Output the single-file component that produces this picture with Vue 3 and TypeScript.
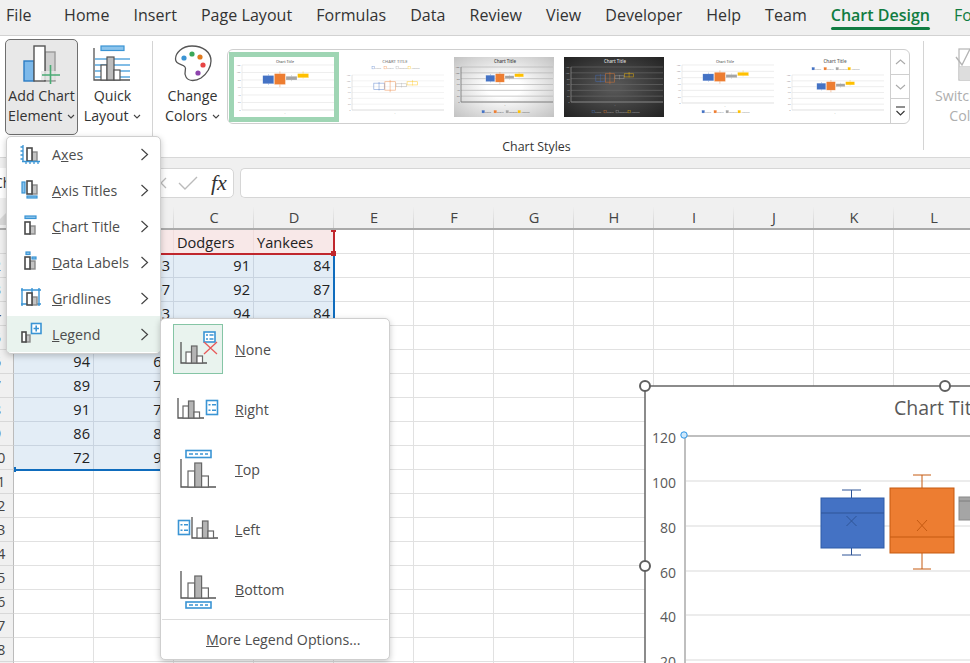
<script setup lang="ts">
const tabs = ['Home', 'Insert', 'Page Layout', 'Formulas', 'Data', 'Review', 'View', 'Developer', 'Help', 'Team']

const bar = (x: number, y: number, w: number, b: number, fill: string, stroke: string, sw = 1.4) =>
  `<rect x="${x}" y="${y}" width="${w}" height="${b - y}" fill="${fill}" stroke="${stroke}" stroke-width="${sw}"/>`
const blue = (x: number, y: number, w: number, h: number) =>
  `<rect x="${x}" y="${y}" width="${w}" height="${h}" fill="#8cc4ec" stroke="#3a94d4" stroke-width="1.2"/>`
const pair = (x: number, w: number, t1: number, t2: number, b: number) =>
  bar(x + w, t2, w, b, '#c4c4c4', '#8a8a8a', 1.4) + bar(x, t1, w, b, '#fff', '#4a4a4a', 1.6)
const legendBox = (x: number, y: number, w: number, h: number) =>
  `<rect x="${x}" y="${y}" width="${w}" height="${h}" fill="#fff" stroke="#3a94d4" stroke-width="1.6"/>`
const legendV = (x: number, y: number, h = 14) =>
  legendBox(x, y, 11, h) +
  `<path d="M${x + 2} ${y + h * 0.3}h2M${x + 5.5} ${y + h * 0.3}h4M${x + 2} ${y + h * 0.7}h2M${x + 5.5} ${y + h * 0.7}h4" stroke="#3a94d4" stroke-width="1.5"/>`
const legendH = (x: number, y: number, h: number) =>
  legendBox(x, y, 25, h) +
  `<path d="M${x + 3} ${y + h / 2}h4M${x + 9} ${y + h / 2}h3M${x + 14} ${y + h / 2}h3M${x + 19} ${y + h / 2}h3" stroke="#3a94d4" stroke-width="1.6"/>`
const axes = (x: number, top: number, base: number, right: number) =>
  `<path d="M${x} ${top}V${base}H${right}" fill="none" stroke="#555" stroke-width="1.3"/>`
const hist = (x: number, w: number, a: number, b: number, c: number, base: number) =>
  bar(x, a, w, base, '#fff', '#666', 1.2) + bar(x + w, b, w, base, '#b4b4b4', '#666', 1.2) + bar(x + 2 * w, c, w, base, '#fff', '#666', 1.2)

const mainItems = [
  { pre: 'A', key: 'x', post: 'es', icon: pair(8, 5, 6, 10, 19) + '<path d="M4 3V20M1.500 5H4M1.500 9H4M1.500 13H4M1.500 17H4M3 19.500H21M7 19.500V22M11 19.500V22M15 19.500V22M19 19.500V22" fill="none" stroke="#3a94d4" stroke-width="1.3"/>' },
  { pre: '', key: 'A', post: 'xis Titles', icon: pair(8, 5, 3, 7, 16) + blue(3, 4, 3, 11) + blue(8, 18, 10, 2) },
  { pre: '', key: 'C', post: 'hart Title', icon: blue(6, 2, 11, 2.5) + pair(6, 5, 8, 12, 20) },
  { pre: '', key: 'D', post: 'ata Labels', icon: blue(7, 2, 4, 2.5) + blue(13, 7, 4, 2) + pair(6, 5, 7, 11, 19) },
  { pre: '', key: 'G', post: 'ridlines', icon: '<path d="M3 2V20M13 2V20M20 2V20M2 4H22M2 18H22" fill="none" stroke="#3a94d4" stroke-width="1.4"/>' + pair(8, 5, 7, 11, 19) },
  { pre: '', key: 'L', post: 'egend', icon: pair(3, 4, 10, 13, 20) + legendBox(12.5, 1.5, 9.5, 10) + '<path d="M17.200 3.500V9.500M14.500 6.500H20" stroke="#3a94d4" stroke-width="1.6"/>', current: true },
]

const legendItems = [
  { key: 'N', post: 'one', selected: true, icon: axes(8, 18, 39, 34) + hist(13, 5.5, 28, 22, 32, 39) + legendV(31, 8, 10) + '<path d="M31 18L44 30M44 18L31 30" stroke="#e85a5a" stroke-width="1.3"/>' },
  { key: 'R', post: 'ight', icon: axes(5, 14, 34, 31) + hist(10, 5.5, 22, 17, 28, 34) + legendV(33.5, 16.5) },
  { key: 'T', post: 'op', icon: legendH(13, 6.5, 7) + axes(8, 15, 43, 43) + hist(15, 6.8, 27, 19, 32, 43) },
  { key: 'L', post: 'eft', icon: legendV(5.5, 16.5) + axes(19, 13, 34, 45) + hist(24, 5.5, 24, 17, 27, 34) },
  { key: 'B', post: 'ottom', icon: axes(8, 7, 34, 43) + hist(15, 6.8, 19, 12, 24, 34) + legendH(13, 38, 6) },
]

const colLetters = 'ABCDEFGHIJKL'.split('')
const aVals: Record<number, number> = { 2: 88, 3: 85, 4: 90, 5: 82, 6: 94, 7: 89, 8: 91, 9: 86, 10: 72 }
const bVals: Record<number, number> = { 2: 83, 3: 97, 4: 93, 5: 65, 6: 68, 7: 75, 8: 79, 9: 84, 10: 92 }
const cVals: Record<number, number> = { 2: 91, 3: 92, 4: 94, 5: 88, 6: 90, 7: 86, 8: 79, 9: 85, 10: 93 }
const dVals: Record<number, number> = { 2: 84, 3: 87, 4: 84, 5: 91, 6: 95, 7: 82, 8: 88, 9: 90, 10: 86 }
const rows = Array.from({ length: 19 }, (_, i) => i + 1)

function cellText(r: number, c: number): string {
  if (r === 1) return ['Tigers', 'Giants', 'Dodgers', 'Yankees'][c] ?? ''
  if (r > 10 || c > 3) return ''
  return String([aVals, bVals, cVals, dVals][c][r])
}
function cellClass(r: number, c: number) {
  return {
    head: r === 1 && c < 4,
    sel: r > 1 && r <= 10 && c < 4,
    num: r > 1,
  }
}

interface Thumb {
  title: string
  tone: string
  titleColor: string
  titleSize: number
  grid: string
  axis: string
  label: string
  left: number
  right: number
  top: number
  bottom: number
  boxW: number
  outline: boolean
  legend: number
  selected?: boolean
}
const thumbs: Thumb[] = [
  { title: 'Chart Title', tone: 'plain', titleColor: '#666', titleSize: 3.6, grid: '#e6e6e6', axis: '#e6e6e6', label: '#888', left: 8, right: 100, top: 8, bottom: 53, boxW: 11, outline: false, legend: 0, selected: true },
  { title: 'CHART TITLE', tone: 'plain', titleColor: '#888', titleSize: 4.2, grid: '#eee', axis: '#ddd', label: '#999', left: 8, right: 100, top: 18, bottom: 53, boxW: 10.5, outline: true, legend: 11 },
  { title: 'Chart Title', tone: 'silver', titleColor: '#444', titleSize: 4.4, grid: '#b4b4b4', axis: '#777', label: '#555', left: 7, right: 99, top: 10, bottom: 45, boxW: 9, outline: false, legend: 55 },
  { title: 'Chart Title', tone: 'dark', titleColor: '#ddd', titleSize: 4.4, grid: '#666', axis: '#888', label: '#aaa', left: 7, right: 99, top: 10, bottom: 45, boxW: 9, outline: true, legend: 55 },
  { title: 'Chart Title', tone: 'plain', titleColor: '#666', titleSize: 3.6, grid: '#e6e6e6', axis: '#e6e6e6', label: '#888', left: 8, right: 100, top: 8, bottom: 46, boxW: 11, outline: false, legend: 55 },
  { title: 'Chart Title', tone: 'plain', titleColor: '#666', titleSize: 4.6, grid: '#e6e6e6', axis: '#e6e6e6', label: '#888', left: 8, right: 100, top: 18, bottom: 53, boxW: 9, outline: false, legend: 12 },
]
const series = [
  { name: 'Tigers', c: '#4472c4', lo: 70, hi: 92, wl: 67, wh: 96 },
  { name: 'Giants', c: '#ed7d31', lo: 68, hi: 97, wl: 61, wh: 103 },
  { name: 'Dodgers', c: '#a5a5a5', lo: 80, hi: 90, wl: 77, wh: 93 },
  { name: 'Yankees', c: '#ffc000', lo: 86, hi: 97, wl: 84, wh: 103 },
]
const ticks = [0, 20, 40, 60, 80, 100, 120]
const ty = (t: Thumb, v: number) => t.bottom - (v / 120) * (t.bottom - t.top)
const tx = (t: Thumb, i: number) => (t.left + t.right) / 2 - 2 + (i - 2) * (t.boxW + 0.6)

const chartTicks = [
  { v: 120, y: 52 },
  { v: 100, y: 97 },
  { v: 80, y: 142 },
  { v: 60, y: 187 },
  { v: 40, y: 231 },
  { v: 20, y: 276 },
]
</script>

<template>
  <div class="app">
    <nav class="tabs">
      <span class="tab file">File</span>
      <span v-for="t in tabs" :key="t" class="tab">{{ t }}</span>
      <span class="tab tab-on">Chart Design</span>
      <span class="tab tab-green">Format</span>
    </nav>

    <section class="ribbon">
      <div class="rb add">
        <svg class="rb-icon" width="40" height="40" viewBox="0 0 40 40">
          <rect x="2" y="17" width="10" height="20" fill="#7db9ea" stroke="#2b7cc4" stroke-width="1.4" />
          <rect x="23" y="8" width="10" height="29" fill="#cfcfcf" stroke="#9a9a9a" stroke-width="1.4" />
          <rect x="12" y="2" width="11" height="35" fill="#fff" stroke="#555" stroke-width="1.4" />
          <rect x="19" y="27" width="19" height="9" fill="#e8e8e8" opacity="0.85" />
          <path d="M20 31H38M28.500 21V40" stroke="#49ab74" stroke-width="1.6" />
        </svg>
        <span>Add Chart</span>
        <span>Element <svg class="caret" width="8" height="5" viewBox="0 0 8 5"><path d="M1 1l3 3 3-3" fill="none" stroke="#444" stroke-width="1.1" /></svg></span>
      </div>
      <div class="rb quick">
        <svg class="rb-icon" width="40" height="40" viewBox="0 0 40 40">
          <path d="M2 16H37M2 22H37M2 28H37M2 34H37" stroke="#5aa8de" stroke-width="1.3" />
          <rect x="8" y="3" width="23" height="4.500" fill="#8cc4ec" stroke="#3a94d4" stroke-width="1.2" />
          <path d="M1 5V37H37" fill="none" stroke="#555" stroke-width="1.3" />
          <rect x="8" y="22" width="6" height="15" fill="#fff" stroke="#555" stroke-width="1.2" />
          <rect x="14" y="14" width="7" height="23" fill="#bdbdbd" stroke="#555" stroke-width="1.2" />
          <rect x="21" y="27" width="6" height="10" fill="#fff" stroke="#555" stroke-width="1.2" />
        </svg>
        <span>Quick</span>
        <span>Layout <svg class="caret" width="8" height="5" viewBox="0 0 8 5"><path d="M1 1l3 3 3-3" fill="none" stroke="#444" stroke-width="1.1" /></svg></span>
      </div>
      <i class="vsep first"></i>
      <div class="rb colors">
        <svg class="rb-icon" width="40" height="40" viewBox="0 0 40 40">
          <path d="M19 3C9 3 2.500 10 2.500 16C2.500 22 10 21 12 24C14 27 10 29 13 34C16 39 23 38 28 35C34 31 38 24 38 18C38 9 30 3 19 3Z" fill="#fff" stroke="#555" stroke-width="1.3" />
          <circle cx="11" cy="15" r="2.600" fill="#3a94d4" />
          <circle cx="19" cy="11" r="2.600" fill="#3aa757" />
          <circle cx="27" cy="14" r="2.600" fill="#e07a1f" />
          <circle cx="30" cy="22" r="2.600" fill="#e84545" />
          <circle cx="25" cy="30" r="2.600" fill="#8e44ad" />
        </svg>
        <span>Change</span>
        <span>Colors <svg class="caret" width="8" height="5" viewBox="0 0 8 5"><path d="M1 1l3 3 3-3" fill="none" stroke="#444" stroke-width="1.1" /></svg></span>
      </div>
      <div class="styles">
        <div class="gallery">
          <div class="thumbs">
            <div v-for="(t, n) in thumbs" :key="n" class="thumb" :class="['tone-' + t.tone, { selected: t.selected }]">
              <svg width="100" height="60" viewBox="0 0 100 60">
                <text x="51" :y="t.selected ? 5.5 : 6" text-anchor="middle" :fill="t.titleColor" :font-size="t.titleSize" font-weight="600">{{ t.title }}</text>
                <line v-for="v in ticks" :key="v" :x1="t.left" :x2="t.right" :y1="ty(t, v)" :y2="ty(t, v)" :stroke="t.grid" stroke-width="0.7" />
                <path :d="`M${t.left} ${t.top}V${t.bottom}H${t.right}`" fill="none" :stroke="t.axis" stroke-width="0.8" />
                <text v-for="v in ticks" :key="'l' + v" :x="t.left - 1.5" :y="ty(t, v) + 0.9" text-anchor="end" :fill="t.label" font-size="2.4">{{ v }}</text>
                <g v-for="(s, i) in series" :key="s.name">
                  <line :x1="tx(t, i) + t.boxW / 2" :x2="tx(t, i) + t.boxW / 2" :y1="ty(t, s.wl)" :y2="ty(t, s.wh)" :stroke="s.c" stroke-width="0.5" opacity="0.8" />
                  <rect :x="tx(t, i)" :y="ty(t, s.hi)" :width="t.boxW" :height="ty(t, s.lo) - ty(t, s.hi)" :fill="t.outline ? 'none' : s.c" :stroke="t.outline ? s.c : '#ffffff80'" :stroke-width="t.outline ? 0.7 : 0.4" :opacity="t.outline ? 0.6 : 1" />
                </g>
                <text x="51" :y="t.bottom + 4" text-anchor="middle" :fill="t.label" font-size="2.4">1</text>
                <g v-if="t.legend">
                  <g v-for="(s, i) in series" :key="'k' + s.name">
                    <rect :x="28 + i * 12" :y="t.legend - 1.5" width="2.4" height="2.4" :fill="t.outline ? 'none' : s.c" :stroke="s.c" stroke-width="0.3" />
                    <text :x="31 + i * 12" :y="t.legend + 0.7" :fill="t.label" font-size="2.2">{{ s.name }}</text>
                  </g>
                </g>
              </svg>
            </div>
          </div>
          <div class="scroll">
            <span><svg width="11" height="6" viewBox="0 0 11 6"><path d="M1 5l4.500-4 4.500 4" fill="none" stroke="#aaa" stroke-width="1.1" /></svg></span>
            <span><svg width="11" height="6" viewBox="0 0 11 6"><path d="M1 1l4.500 4 4.500-4" fill="none" stroke="#aaa" stroke-width="1.1" /></svg></span>
            <span><svg width="11" height="10" viewBox="0 0 11 10"><path d="M1 1H10" stroke="#333" stroke-width="1.1" /><path d="M1.500 5l4 4 4-4" fill="none" stroke="#333" stroke-width="1.1" /></svg></span>
          </div>
        </div>
        <div class="group-label">Chart Styles</div>
      </div>
      <i class="vsep second"></i>
      <div class="rb switch">
        <svg class="rb-icon" width="40" height="40" viewBox="0 0 40 40">
          <rect x="4" y="6" width="30" height="31" fill="none" stroke="#bbb" stroke-width="1.3" />
          <path d="M4 24H34M19 6V37" stroke="#ccc" stroke-width="1.3" />
          <rect x="4.500" y="24" width="14" height="13" fill="#ddd" />
          <path d="M1 14l6 8 8-16" fill="none" stroke="#b5b5b5" stroke-width="1.4" />
        </svg>
        <span>Switch Row/</span>
        <span>Column</span>
      </div>
    </section>

    <div class="strip"></div>

    <div class="formula">
      <div class="namebox"><span>Chart 1</span></div>
      <div class="fxbox">
        <svg class="fx-x" width="14" height="14" viewBox="0 0 14 14"><path d="M2 2l10 10M12 2L2 12" stroke="#bbb" stroke-width="1.3" /></svg>
        <svg class="fx-check" width="20" height="14" viewBox="0 0 20 14"><path d="M1 7l6 6L19 1" fill="none" stroke="#bbb" stroke-width="1.4" /></svg>
        <span class="fx">fx</span>
      </div>
      <div class="input"></div>
    </div>

    <div class="sheet">
      <div class="grid">
        <div class="corner"><i></i></div>
        <div v-for="c in colLetters" :key="c" class="colhead">{{ c }}</div>
        <template v-for="r in rows" :key="r">
          <div class="rowhead"><span>{{ r }}</span></div>
          <div v-for="(c, ci) in colLetters" :key="c" class="cell" :class="cellClass(r, ci)">{{ cellText(r, ci) }}</div>
        </template>
      </div>
      <i class="range-blue"></i>
      <i class="range-red"></i>
      <i class="h-red a"></i>
      <i class="h-red b"></i>
      <i class="h-blue"></i>

      <svg class="chart" width="340" height="290" viewBox="0 0 340 290">
        <rect x="1" y="1" width="340" height="300" fill="#fff" stroke="#666" stroke-width="1.5" />
        <text x="250" y="30" fill="#595959" font-size="19.5">Chart Title</text>
        <line v-for="t in chartTicks.slice(1)" :key="t.v" x1="41" x2="340" :y1="t.y - 1" :y2="t.y - 1" stroke="#d9d9d9" stroke-width="1" />
        <path d="M41 290V51H340" fill="none" stroke="#bfbfbf" stroke-width="2" />
        <text v-for="t in chartTicks" :key="'t' + t.v" x="32" :y="t.y + 6" text-anchor="end" fill="#595959" font-size="14">{{ t.v }}</text>
        <circle cx="40" cy="50" r="3.2" fill="#cfe8fb" stroke="#2b95e6" stroke-width="1" />

        <path d="M198 105H217M207.500 105V113M198 170H217M207.500 163V170" fill="none" stroke="#2f5597" stroke-width="1" />
        <rect x="177" y="113" width="63" height="50" fill="#4472c4" stroke="#2f5da8" stroke-width="1" />
        <path d="M177 128H240M202.500 131L212.500 141M212.500 131L202.500 141" fill="none" stroke="#2f5597" stroke-width="1" />

        <path d="M269 90H287M278 90V103M269 184H287M278 168V184" fill="none" stroke="#c55a11" stroke-width="1" />
        <rect x="246" y="103" width="64" height="65" fill="#ed7d31" stroke="#c55a11" stroke-width="1" />
        <path d="M246 152H310M273 135L283 146M283 135L273 146" fill="none" stroke="#c55a11" stroke-width="1" />

        <rect x="315" y="112" width="30" height="23" fill="#a5a5a5" stroke="#8a8a8a" stroke-width="1" />
        <path d="M315 116H340" stroke="#7f7f7f" stroke-width="1" />

        <circle cx="1" cy="1" r="5" fill="#fff" stroke="#5f5f5f" stroke-width="2" />
        <circle cx="301" cy="1" r="5" fill="#fff" stroke="#5f5f5f" stroke-width="2" />
        <circle cx="1" cy="181" r="5" fill="#fff" stroke="#5f5f5f" stroke-width="2" />
      </svg>
    </div>

    <div class="menu main-menu">
      <div v-for="m in mainItems" :key="m.post" class="mi" :class="{ current: m.current }">
        <svg class="mi-icon" width="24" height="24" viewBox="0 0 24 24" v-html="m.icon"></svg>
        <span class="mi-label">{{ m.pre }}<u>{{ m.key }}</u>{{ m.post }}</span>
        <svg class="chev" width="9" height="13" viewBox="0 0 9 13"><path d="M1.500 1l6 5.500-6 5.500" fill="none" stroke="#444" stroke-width="1.2" /></svg>
      </div>
    </div>

    <div class="menu legend-menu">
      <div v-for="m in legendItems" :key="m.post" class="li">
        <span class="li-box" :class="{ selected: m.selected }">
          <svg width="50" height="50" viewBox="0 0 50 50" v-html="m.icon"></svg>
        </span>
        <span class="li-label"><u>{{ m.key }}</u>{{ m.post }}</span>
      </div>
      <div class="more"><span><u>M</u>ore Legend Options...</span></div>
    </div>
  </div>
</template>

<style>
html, body { margin: 0; padding: 0; overflow: hidden; background: #fff; }
</style>

<style scoped>
.app {
  position: relative;
  width: 970px;
  height: 663px;
  overflow: hidden;
  font-family: "Open Sans", "Noto Sans", sans-serif;
  color: #333;
  background: #fff;
}
.tabs {
  display: flex;
  gap: 24px;
  height: 35px;
  padding-left: 6px;
  align-items: flex-start;
  background: #f0f0f0;
  border-bottom: 1px solid #d2d2d2;
  font-size: 16px;
  letter-spacing: 0.05px;
  line-height: 31px;
  white-space: nowrap;
  box-sizing: content-box;
}
.tab { position: relative; height: 30px; }
.file { margin-right: 8.5px; }
.tab-on { color: #107c41; font-weight: 600; letter-spacing: 0; }
.tab-on::after {
  content: "";
  position: absolute;
  left: 0;
  right: 0;
  top: 27px;
  height: 3px;
  border-radius: 2px;
  background: #107c41;
}
.tab-green { color: #107c41; }

.ribbon {
  display: flex;
  align-items: flex-start;
  height: 121px;
  padding: 3px 0 0 5px;
  box-sizing: border-box;
  background: #fff;
  font-size: 14.2px;
  line-height: 20px;
  overflow: hidden;
}
.rb {
  display: flex;
  flex-direction: column;
  align-items: center;
  flex: none;
  white-space: nowrap;
  box-sizing: border-box;
  height: 96px;
}
.rb-icon { margin: 4px 0 3px; display: block; flex: none; }
.add .rb-icon { margin-bottom: 2px; }
.caret { vertical-align: 2px; margin-left: 1px; }
.add {
  width: 73px;
  background: #e8e8e8;
  border: 1px solid #6f6f6f;
  border-radius: 5px;
}
.quick { width: 65px; margin-left: 2px; }
.vsep { display: block; flex: none; width: 1px; height: 109px; margin-top: 2px; background: #d4d4d4; }
.vsep.first { margin-left: 7px; }
.colors { width: 65px; margin-left: 7px; }
.styles { margin-left: 2px; width: 683px; flex: none; }
.gallery {
  display: flex;
  height: 75px;
  margin-top: 10px;
  box-sizing: border-box;
  border: 1px solid #cfcfcf;
  border-radius: 6px;
  background: #fff;
}
.thumbs { flex: 1; display: flex; align-items: center; gap: 10px; padding-left: 1px; }
.thumb { width: 100px; height: 60px; flex: none; background: #fff; line-height: 0; overflow: hidden; }
.thumb text { font-family: "Open Sans", sans-serif; }
.thumb.selected { border: 5px solid #9fd5b4; margin-right: -5px; }
.tone-silver { background: radial-gradient(ellipse at center, #fff 25%, #c2c2c2 100%); }
.tone-dark { background: radial-gradient(ellipse at center, #555 10%, #222 100%); }
.scroll { width: 18px; flex: none; display: flex; flex-direction: column; border-left: 1px solid #cfcfcf; }
.scroll span { display: flex; align-items: center; justify-content: center; height: 24.5px; border-bottom: 1px solid #cfcfcf; }
.scroll span:last-child { border-bottom: 0; }
.group-label { text-align: center; font-size: 12.4px; line-height: 16px; margin-top: 15px; color: #333; padding-right: 64px; }
.vsep.second { margin-left: 13px; }
.switch { color: #aeaeae; width: 80px; margin-left: 11px; }

.strip { height: 11px; background: #f0f0f0; border-top: 1px solid #d8d8d8; box-sizing: border-box; }

.formula {
  display: flex;
  height: 30px;
  background: #f0f0f0;
}
.namebox {
  flex: none;
  width: 150px;
  background: #fff;
  font-size: 14px;
  line-height: 30px;
  white-space: nowrap;
  overflow: hidden;
}
.namebox span { display: block; margin-left: -6px; }
.fxbox {
  display: flex;
  align-items: center;
  flex: none;
  width: 84px;
  padding-left: 3px;
  box-sizing: border-box;
  background: #fff;
  border: 1px solid #d6d6d6;
  border-radius: 5px;
}
.fx-check { margin-left: 10px; }
.fx { font-family: "Liberation Serif", serif; font-style: italic; font-size: 22px; font-weight: 400; color: #333; margin-left: 13px; line-height: 26px; }
.input {
  flex: 1;
  margin-left: 6px;
  background: #fff;
  border: 1px solid #d6d6d6;
  border-right: 0;
  border-radius: 5px 0 0 5px;
}

.sheet { position: relative; height: 465px; overflow: hidden; background: #fff; }
.grid {
  display: grid;
  grid-template-columns: 14px repeat(12, 80px);
  grid-template-rows: 32px;
  grid-auto-rows: 24px;
  font-size: 14.6px;
  color: #222;
}
.corner { background: #f0f0f0; border-bottom: 2px solid #aaa; border-right: 1px solid #bbb; position: relative; overflow: hidden; box-sizing: border-box; }
.corner i { position: absolute; left: -6px; bottom: 3px; border-style: solid; border-width: 0 0 12px 12px; border-color: transparent transparent #d8d8d8 transparent; }
.colhead {
  display: flex;
  align-items: flex-end;
  justify-content: center;
  box-sizing: border-box;
  line-height: 22px;
  font-size: 14.6px;
  color: #444;
  border-bottom: 2px solid #aaa;
  background: #f0f0f0 linear-gradient(to bottom, transparent 28%, #d0d0d0 100%) right / 1px 100% no-repeat;
}
.rowhead {
  background: #f0f0f0;
  border-right: 1px solid #bbb;
  border-bottom: 1px solid #d8d8d8;
  box-sizing: border-box;
  overflow: hidden;
  line-height: 23px;
  color: #444;
}
.rowhead span { display: block; width: 32px; margin-left: -19px; text-align: center; }
.cell {
  box-sizing: border-box;
  border-right: 1px solid #e1e1e1;
  border-bottom: 1px solid #e1e1e1;
  padding: 0 3px;
  line-height: 23px;
  white-space: nowrap;
  overflow: hidden;
}
.cell.num { text-align: right; }
.cell.head { background: #f8e8e8; border-color: #f0dcdc; line-height: 25px; }
.cell.sel { background: #e3edf6; border-color: #c9d4e0; }
.range-blue {
  position: absolute;
  left: 14px;
  top: 56px;
  width: 321px;
  height: 217px;
  box-sizing: border-box;
  border-right: 2px solid #0f6cbd;
  border-bottom: 2px solid #0f6cbd;
}
.range-red {
  position: absolute;
  left: 14px;
  top: 32px;
  width: 321px;
  height: 25px;
  box-sizing: border-box;
  border-right: 2px solid #c0272d;
  border-bottom: 2px solid #c0272d;
}
.h-red { position: absolute; background: #c0272d; }
.h-red.a { left: 331px; top: 53px; width: 5px; height: 5px; }
.h-red.b { left: 331px; top: 32px; width: 5px; height: 2px; }
.h-blue { position: absolute; left: 14px; top: 269px; width: 2px; height: 5px; background: #0f6cbd; }
.chart { position: absolute; left: 644px; top: 187px; overflow: visible; }
.chart text { font-family: "Open Sans", sans-serif; }

.menu {
  position: absolute;
  box-sizing: border-box;
  background: #fff;
  border: 1px solid #cfcfcf;
  border-radius: 5px;
  box-shadow: 0 2px 6px rgba(0, 0, 0, 0.22);
  font-size: 14.2px;
  color: #4d4d4d;
}
.main-menu { left: 6px; top: 136px; width: 155px; height: 218px; z-index: 2; overflow: hidden; }
.mi { display: flex; align-items: center; height: 36px; padding-left: 12px; position: relative; top: -1px; white-space: nowrap; }
.mi.current { background: #e9f3ee; }
.mi-icon { flex: none; }
.mi-label { margin-left: 9px; flex: 1; }
.chev { flex: none; margin-right: 11px; }
.legend-menu { left: 160px; top: 318px; width: 230px; height: 342px; z-index: 3; }
.li { display: flex; align-items: center; height: 60px; padding-left: 12px; box-sizing: border-box; }
.li-box { display: block; width: 50px; height: 50px; flex: none; line-height: 0; outline: 1px solid transparent; outline-offset: -1px; }
.li-box.selected { background: #e9f3ee; outline-color: #85c5a5; }
.li-label { margin-left: 12px; }
.more {
  height: 39px;
  border-top: 1px solid #dcdcdc;
  display: flex;
  align-items: center;
  padding-left: 44px;
  margin: 0 1px;
  white-space: nowrap;
}
</style>
